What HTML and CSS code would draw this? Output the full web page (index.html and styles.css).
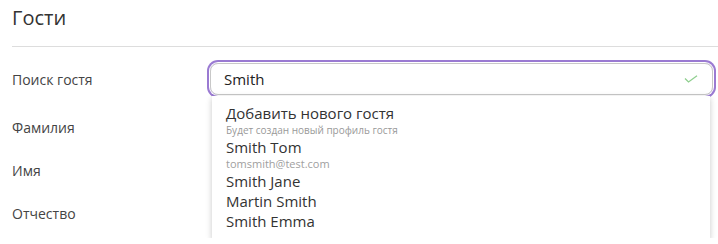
FILE: index.html
```html
<!DOCTYPE html>
<html lang="ru">
<head>
  <meta charset="UTF-8">
  <title>Гости</title>
  <link rel="stylesheet" href="styles.css">
</head>
<body>
<div class="panel">
  <h2 class="title">Гости</h2>

  <div class="row row-search">
    <label class="label">Поиск гостя</label>
    <div class="field">
      <div class="input">
        <span class="value">Smith</span>
        <svg class="check" width="14" height="8" viewBox="0 0 14 8">
          <path d="M1 3.5 L4.5 7 L13 0.8" fill="none" stroke="#8fcf8f" stroke-width="1.3"/>
        </svg>
      </div>
      <ul class="dropdown">
        <li>
          <div class="name">Добавить нового гостя</div>
          <div class="hint">Будет создан новый профиль гостя</div>
        </li>
        <li>
          <div class="name">Smith Tom</div>
          <div class="mail">tomsmith@test.com</div>
        </li>
        <li><div class="name">Smith Jane</div></li>
        <li><div class="name">Martin Smith</div></li>
        <li><div class="name">Smith Emma</div></li>
      </ul>
    </div>
  </div>

  <div class="row">
    <label class="label">Фамилия</label>
  </div>
  <div class="row">
    <label class="label">Имя</label>
  </div>
  <div class="row">
    <label class="label">Отчество</label>
  </div>
</div>
</body>
</html>
```

FILE: styles.css
```css
body {
  font-family: "Open Sans", "Noto Sans", sans-serif;
  margin: 0;
  padding: 0;
  background: #fff;
  color: #333;
}

.panel {
  padding: 4px 0 0 12px;
}

.title {
  margin: 0;
  padding-bottom: 14px;
  border-bottom: 1px solid #ddd;
  font-size: 20px;
  font-weight: 400;
  line-height: 28px;
  color: #333;
}

.row {
  display: grid;
  grid-template-columns: 196px 507px;
  align-items: center;
  height: 36px;
  margin-bottom: 7px;
}

.row-search {
  margin-top: 14px;
  margin-bottom: 12px;
}

.label {
  font-size: 14px;
  color: #444;
}

.field {
  position: relative;
  height: 36px;
}

.input {
  display: flex;
  align-items: center;
  justify-content: space-between;
  height: 32px;
  margin: 2px;
  padding: 0 14px 0 13px;
  border: 1px solid #c8c8c8;
  border-radius: 8px;
  box-shadow: 0 0 0 1px #fff, 0 0 0 3px #9a7ad2;
  box-sizing: border-box;
  font-size: 15px;
  color: #222;
}

.check {
  display: block;
}

.dropdown {
  position: absolute;
  left: 4px;
  top: 35px;
  z-index: 2;
  width: 498px;
  margin: 0;
  padding: 7px 0 8px;
  list-style: none;
  background: #fff;
  box-shadow: 0 2px 6px rgba(0, 0, 0, 0.22);
}

.dropdown li {
  padding: 0 14px;
}

.name {
  font-size: 15px;
  line-height: 20px;
  color: #333;
}

.hint {
  font-size: 10px;
  line-height: 14px;
  color: #999;
}

.mail {
  font-size: 11px;
  line-height: 14px;
  color: #a0a0a0;
}
```
